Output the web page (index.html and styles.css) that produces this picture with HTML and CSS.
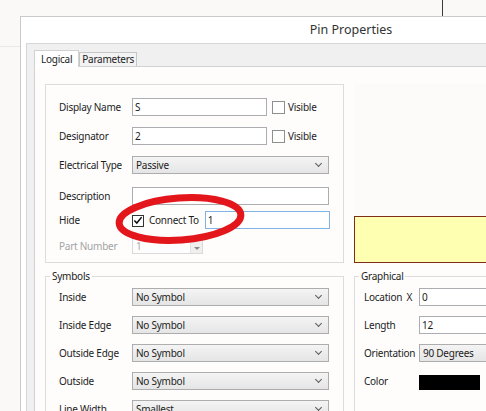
FILE: index.html
```html
<!DOCTYPE html>
<html>
<head>
<title>Pin Properties</title>
<link rel="stylesheet" href="styles.css">
</head>
<body>

    <div class="back-edge"></div>
    <div class="back-line"></div>

    <div class="dialog">
        <div class="titlebar">Pin Properties</div>
        <div class="frame">
            <div class="client">
                <div class="tabs">
                    <span class="tab active">Logical</span>
                    <span class="tab">Parameters</span>
                </div>
                <div class="tab-page">
                    <div class="layout">

                        <fieldset class="group logical">
                            <div class="row">
                                <label class="caption">Display Name</label>
                                <div class="edit short">S</div>
                                <span class="check"></span>
                                <span class="check-text">Visible</span>
                            </div>
                            <div class="row">
                                <label class="caption">Designator</label>
                                <div class="edit short">2</div>
                                <span class="check"></span>
                                <span class="check-text">Visible</span>
                            </div>
                            <div class="row">
                                <label class="caption">Electrical Type</label>
                                <div class="combo">Passive</div>
                            </div>
                            <div class="row gap-wide">
                                <label class="caption">Description</label>
                                <div class="edit wide"></div>
                            </div>
                            <div class="row gap-tight">
                                <label class="caption">Hide</label>
                                <span class="check checked">
                                    <svg width="11" height="11" viewBox="0 0 11 11"><path d="M1.5 5.5 L4.2 8.3 L9.5 1.8" fill="none" stroke="#111" stroke-width="1.7"/></svg>
                                </span>
                                <span class="connect-text">Connect To</span>
                                <div class="edit focus">1</div>
                            </div>
                            <div class="row gap-mid spin-row">
                                <label class="caption disabled">Part Number</label>
                                <div class="spin">
                                    <span>1</span>
                                    <span class="spin-btn"><i></i></span>
                                </div>
                            </div>
                        </fieldset>

                        <div class="preview">
                            <div class="pin-note"></div>
                        </div>

                        <fieldset class="group symbols">
                            <legend>Symbols</legend>
                            <div class="row">
                                <label class="caption">Inside</label>
                                <div class="combo">No Symbol</div>
                            </div>
                            <div class="row">
                                <label class="caption">Inside Edge</label>
                                <div class="combo">No Symbol</div>
                            </div>
                            <div class="row">
                                <label class="caption">Outside Edge</label>
                                <div class="combo">No Symbol</div>
                            </div>
                            <div class="row">
                                <label class="caption">Outside</label>
                                <div class="combo">No Symbol</div>
                            </div>
                            <div class="row">
                                <label class="caption">Line Width</label>
                                <div class="combo">Smallest</div>
                            </div>
                        </fieldset>

                        <fieldset class="group graphical">
                            <legend>Graphical</legend>
                            <div class="row">
                                <label class="caption"><span>Location</span><span>X</span></label>
                                <div class="edit">0</div>
                            </div>
                            <div class="row">
                                <label class="caption">Length</label>
                                <div class="edit">12</div>
                            </div>
                            <div class="row">
                                <label class="caption">Orientation</label>
                                <div class="combo">90 Degrees</div>
                            </div>
                            <div class="row">
                                <label class="caption">Color</label>
                                <div class="swatch"></div>
                            </div>
                        </fieldset>

                    </div>
                </div>
            </div>
        </div>
    </div>

    <!-- red marker drawn round the Connect To option -->
    <svg class="marker" width="486" height="411" viewBox="0 0 486 411">
        <ellipse cx="180" cy="219" rx="61" ry="21" transform="rotate(-4 180 219)" fill="none" stroke="#e3161c" stroke-width="7"/>
    </svg>

</body>
</html>
```

FILE: styles.css
```css
html, body {
    overflow: hidden;
}

body {
    margin: 0;
    width: 486px;
    height: 411px;
    position: relative;
    background-color: #fbf9f7;
    font-family: "Noto Sans", "Open Sans", sans-serif;
    font-size: 10px;
    letter-spacing: -0.25px;
    color: #1c1c1c;
}

/* bits of the windows behind the dialog */
.back-edge {
    position: absolute;
    left: 442px;
    top: 0;
    width: 1px;
    height: 16px;
    background-color: #3a3a3a;
}

.back-line {
    position: absolute;
    left: 0;
    top: 46px;
    width: 20px;
    height: 1px;
    background-color: #ebe9e7;
}

.dialog {
    margin: 16px 0 0 20px;
    width: 660px;
    height: 420px;
    border: 1px solid #cacaca;
    background-color: #fff;
}

.titlebar {
    height: 26px;
    line-height: 26px;
    text-align: center;
    font-size: 12.5px;
    letter-spacing: 0;
    color: #333;
}

.frame {
    padding: 0 5px;
    height: 100%;
}

.client {
    height: 100%;
    border-top: 1px solid #d6d6d6;
    border-left: 1px solid #d6d6d6;
    background-color: #f0f0f0;
    padding: 7px 0 0 7px;
}

.tabs {
    display: flex;
    align-items: flex-end;
    height: 15px;
}

.tab {
    height: 13px;
    line-height: 12px;
    padding: 0 2px;
    border: 1px solid #c6c6c6;
    border-bottom: none;
    background-color: #f3f3f3;
    color: #222;
}

.tab.active {
    height: 16px;
    line-height: 17px;
    padding: 0 6px;
    margin-bottom: -1px;
    background-color: #fff;
    position: relative;
    border-color: #d2d2d2;
}

.tab-page {
    height: 100%;
    border: 1px solid #d2d2d2;
    background-color: #fefdfc;
    padding: 17px 0 0 10px;
}

.layout {
    display: grid;
    grid-template-columns: 299px 300px;
    column-gap: 10px;
    row-gap: 6px;
}

.group {
    margin: 0;
    border: 1px solid #dcdcdc;
    min-width: 0;
}

.group legend {
    padding: 0 2px;
    line-height: 14px;
    color: #222;
}

.logical {
    padding: 13px 0 8px 13px;
}

.symbols {
    padding: 5px 0 20px 4px;
}

.symbols .row {
    margin-left: 9px;
}

.graphical {
    padding: 5px 0 20px 4px;
}

.graphical .row {
    margin-left: 5px;
}

.row {
    display: flex;
    align-items: center;
    height: 18px;
    margin-top: 10px;
}

.row:first-of-type {
    margin-top: 0;
}

.logical .row {
    margin-top: 11px;
}

.logical .row:first-child {
    margin-top: 0;
}

.logical .row.gap-wide {
    margin-top: 13px;
}

.logical .row.gap-tight {
    margin-top: 6px;
}

.logical .row.gap-mid {
    margin-top: 9px;
}

.logical .spin-row {
    height: 16px;
}

.caption {
    width: 73px;
    flex: none;
    white-space: nowrap;
}

.graphical .caption {
    width: 55px;
    display: flex;
    justify-content: space-between;
    padding-right: 7px;
    box-sizing: border-box;
}

.caption.disabled {
    color: #a3a3a3;
}

.edit {
    box-sizing: border-box;
    height: 18px;
    line-height: 16px;
    padding: 0 2px;
    border: 1px solid #acadb1;
    background-color: #fff;
    width: 120px;
}

.edit.short {
    width: 135px;
}

.edit.wide {
    width: 197px;
}

.edit.focus {
    width: 125px;
    margin-left: 6px;
    border-color: #7fb3e6;
}

.combo {
    box-sizing: border-box;
    width: 197px;
    height: 18px;
    line-height: 16px;
    padding: 0 0 0 3px;
    border: 1px solid #adadad;
    background: linear-gradient(#f4f4f4, #e5e5e5);
    display: flex;
    justify-content: space-between;
    align-items: center;
}

.graphical .combo {
    width: 120px;
}

/* little chevron at the right end of a combo box */
.combo::after {
    content: "";
    width: 4px;
    height: 4px;
    border-right: 1.5px solid #5a5a5a;
    border-bottom: 1.5px solid #5a5a5a;
    transform: rotate(45deg);
    margin: -3px 7px 0 0;
}

.check {
    box-sizing: border-box;
    width: 13px;
    height: 13px;
    margin-left: 5px;
    border: 1px solid #8e8f8f;
    background-color: #fff;
    display: flex;
    align-items: center;
    justify-content: center;
}

.check.checked {
    width: 12px;
    height: 12px;
    margin-left: 0;
    margin-top: 1px;
    border-color: #333;
}

.check-text {
    margin-left: 3px;
}

.connect-text {
    margin-left: 5px;
    white-space: nowrap;
}

.spin {
    box-sizing: border-box;
    width: 71px;
    height: 16px;
    border: 1px solid #dadada;
    background-color: #fdfdfd;
    color: #a8a8a8;
    padding-left: 3px;
    display: flex;
    justify-content: space-between;
    align-items: stretch;
    line-height: 14px;
}

.spin-btn {
    width: 12px;
    border-left: 1px solid #e2e2e2;
    background-color: #efefef;
    display: flex;
    align-items: flex-end;
    justify-content: center;
    padding-bottom: 3px;
    box-sizing: border-box;
}

.spin-btn i {
    width: 0;
    height: 0;
    border-left: 3px solid transparent;
    border-right: 3px solid transparent;
    border-top: 3px solid #8a8a8a;
}

.swatch {
    width: 61px;
    height: 15px;
    margin-top: 2px;
    background-color: #000;
}

.preview {
    background-color: #fdfbf9;
    display: flex;
    flex-direction: column;
    justify-content: flex-end;
}

.pin-note {
    height: 47px;
    box-sizing: border-box;
    border: 1px solid #7d2d1a;
    background-color: #ffffb1;
}

.marker {
    position: absolute;
    left: 0;
    top: 0;
    pointer-events: none;
}
```
